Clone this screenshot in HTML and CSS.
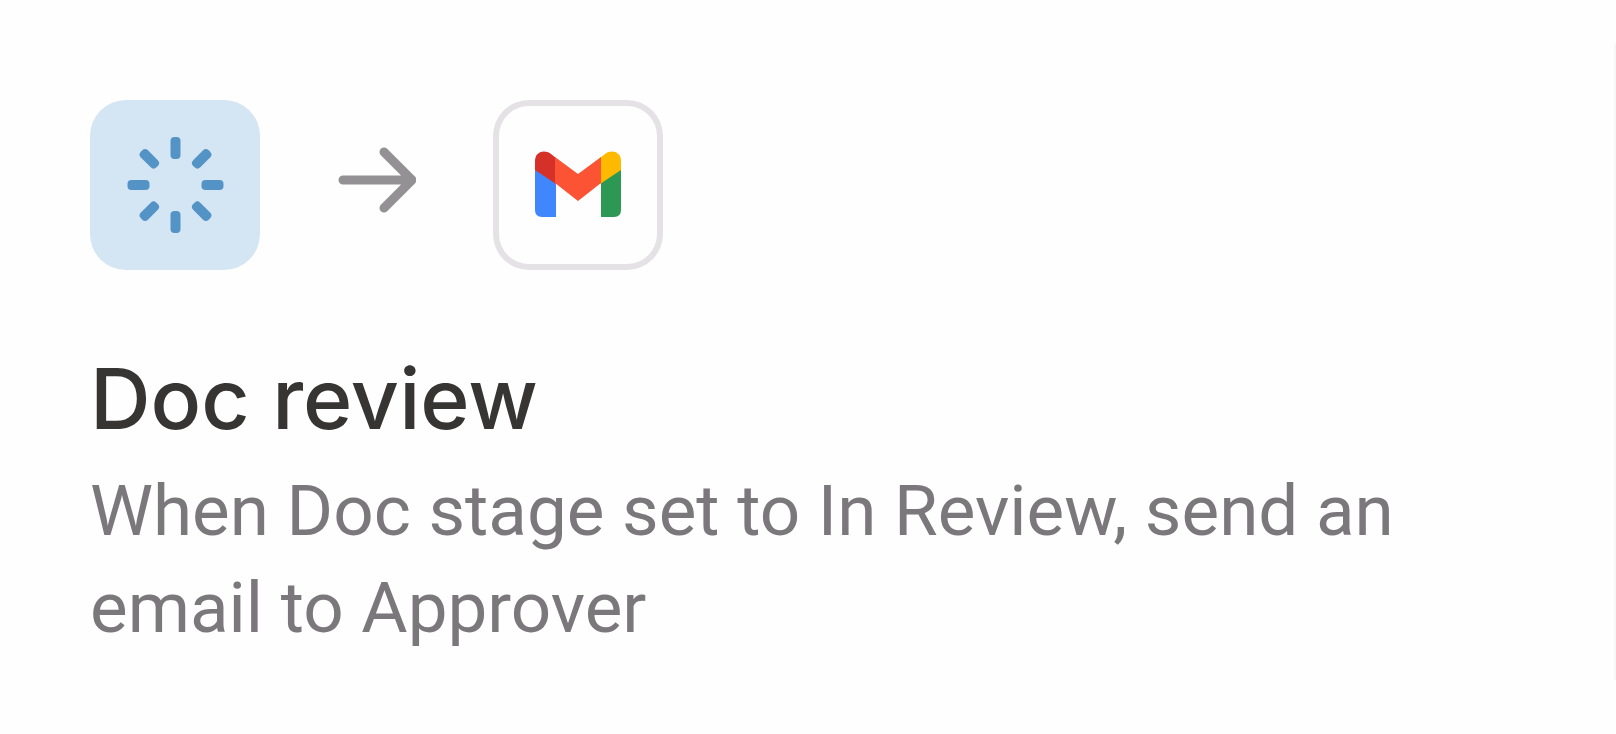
FILE: index.html
```html
<!DOCTYPE html>
<html lang="en">
<head>
<meta charset="utf-8">
<meta name="viewport" content="width=device-width, initial-scale=1">
<title>Doc review</title>
<link rel="stylesheet" href="styles.css">
</head>
<body>
<main class="page">
  <article class="card">
    <div class="flow">
      <div class="tile tile-trigger">
        <svg class="icon" viewBox="0 0 170 170" aria-hidden="true">
          <defs><rect id="ray" x="-5" y="-48" width="10" height="22" rx="4"/></defs>
          <g fill="#5493c6" transform="translate(85.500 85)">
            <use href="#ray"/>
            <use href="#ray" transform="rotate(45)"/>
            <use href="#ray" transform="rotate(90)"/>
            <use href="#ray" transform="rotate(135)"/>
            <use href="#ray" transform="rotate(180)"/>
            <use href="#ray" transform="rotate(225)"/>
            <use href="#ray" transform="rotate(270)"/>
            <use href="#ray" transform="rotate(315)"/>
          </g>
        </svg>
      </div>
      <svg class="arrow" viewBox="0 0 79 170" aria-hidden="true">
        <path d="M6 80H75M47 52L75 80L47 108" fill="none" stroke="#939194" stroke-width="9" stroke-linecap="round" stroke-linejoin="round"/>
      </svg>
      <div class="tile tile-action">
        <svg class="icon" viewBox="0 0 170 170" role="img" aria-label="Gmail">
          <path fill="#4086fd" d="M42 69L63 82V117H49Q42 117 42 110Z"/>
          <path fill="#2d9854" d="M108 82L128 69V110Q128 117 121 117H108Z"/>
          <path fill="#d53128" d="M42 70V61C42 52 51 49 58 54L63 58V84Z"/>
          <path fill="#ffba00" d="M128 70V61C128 52 119 49 112 54L107 58V84Z"/>
          <path fill="#fc5335" d="M62 57L85 74L108 57V83L85 101L62 83Z"/>
        </svg>
      </div>
    </div>
    <h1 class="title">Doc review</h1>
    <p class="description">When Doc stage set to In Review, send an email to Approver</p>
  </article>
  <div class="edge"></div>
</main>
</body>
</html>
```
FILE: styles.css
```css
* {
  box-sizing: border-box;
}

body {
  margin: 0;
  background: #fefefe;
  font-family: Inter, "Liberation Sans", sans-serif;
}

.page {
  display: flex;
  min-height: 100vh;
}

.card {
  flex: 1;
  padding: 100px 90px 48px;
}

.flow {
  display: flex;
  align-items: center;
  gap: 77px;
}

.tile {
  width: 170px;
  height: 170px;
  border-radius: 36px;
}

.tile-trigger {
  background: #d4e5f3;
}

.tile-action {
  background: #fefefe;
  box-shadow: inset 0 0 0 6px #e4e2e5;
}

.icon {
  display: block;
  width: 100%;
}

.arrow {
  width: 79px;
  height: 170px;
}

.title {
  margin: 78px 0 0;
  color: #373534;
  font-size: 84px;
  font-weight: 500;
  line-height: 102px;
}

.description {
  max-width: 1340px;
  margin: 12px 0 0;
  color: #7b787b;
  font-family: Roboto, "Liberation Sans", sans-serif;
  font-size: 71px;
  line-height: 97px;
}

.edge {
  width: 2px;
  margin: 44px 0 54px;
  background: #f7f6f8;
}
```
